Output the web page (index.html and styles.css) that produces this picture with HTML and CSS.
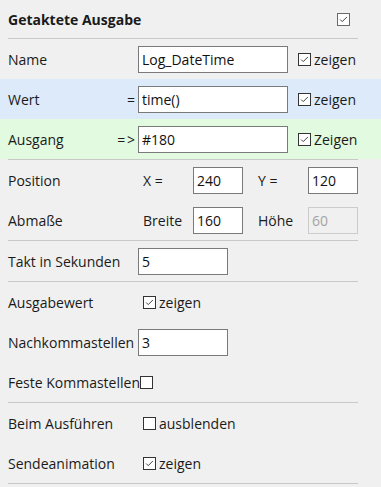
FILE: index.html
```html
<!DOCTYPE html>
<html lang="de">
<head>
  <meta charset="UTF-8">
  <title>Getaktete Ausgabe</title>
  <link rel="stylesheet" href="styles.css">
</head>
<body>

  <div class="panel">
    <!-- Kopf -->
    <div class="head">
      <span class="title">Getaktete Ausgabe</span>
      <span class="cb head-cb"><svg viewBox="0 0 13 13"><polyline points="2.5,6.5 5,9 10.5,3.5"/></svg></span>
    </div>
    <div class="sep"></div>

    <div class="row">
      <span class="lbl">Name</span>
      <input class="field wide" type="text" value="Log_DateTime">
      <span class="opt"><span class="cb"><svg viewBox="0 0 13 13"><polyline points="2.5,6.5 5,9 10.5,3.5"/></svg></span>zeigen</span>
    </div>

    <div class="row blue">
      <span class="lbl">Wert<span class="op">=</span></span>
      <input class="field wide" type="text" value="time()">
      <span class="opt"><span class="cb"><svg viewBox="0 0 13 13"><polyline points="2.5,6.5 5,9 10.5,3.5"/></svg></span>zeigen</span>
    </div>

    <div class="row green">
      <span class="lbl">Ausgang<span class="op">= &gt;</span></span>
      <input class="field wide" type="text" value="#180">
      <span class="opt"><span class="cb"><svg viewBox="0 0 13 13"><polyline points="2.5,6.5 5,9 10.5,3.5"/></svg></span>Zeigen</span>
    </div>
    <div class="sep"></div>

    <div class="row">
      <span class="lbl lbl-w">Position</span>
      <span class="sub">X =</span>
      <input class="field small" type="text" value="240">
      <span class="sub sub-2">Y =</span>
      <input class="field small" type="text" value="120">
    </div>

    <div class="row">
      <span class="lbl lbl-w">Abmaße</span>
      <span class="sub">Breite</span>
      <input class="field small" type="text" value="160">
      <span class="sub sub-2">Höhe</span>
      <input class="field small" type="text" value="60" disabled>
    </div>
    <div class="sep"></div>

    <div class="row">
      <span class="lbl">Takt in Sekunden</span>
      <input class="field mid" type="text" value="5">
    </div>
    <div class="sep"></div>

    <div class="row">
      <span class="lbl lbl-w">Ausgabewert</span>
      <span class="opt"><span class="cb"><svg viewBox="0 0 13 13"><polyline points="2.5,6.5 5,9 10.5,3.5"/></svg></span>zeigen</span>
    </div>

    <div class="row">
      <span class="lbl">Nachkommastellen</span>
      <input class="field mid" type="text" value="3">
    </div>

    <div class="row">
      <span>Feste Kommastellen</span><span class="cb"></span>
    </div>
    <div class="sep"></div>

    <div class="row">
      <span class="lbl lbl-w">Beim Ausführen</span>
      <span class="opt"><span class="cb"></span>ausblenden</span>
    </div>

    <div class="row">
      <span class="lbl lbl-w">Sendeanimation</span>
      <span class="opt"><span class="cb"><svg viewBox="0 0 13 13"><polyline points="2.5,6.5 5,9 10.5,3.5"/></svg></span>zeigen</span>
    </div>
    <div class="sep"></div>
  </div>

</body>
</html>
```

FILE: styles.css
```css
* {
  margin: 0;
  padding: 0;
  box-sizing: border-box;
}

body {
  font-family: 'Open Sans', 'Noto Sans', sans-serif;
  font-size: 14px;
  color: #1a1a1a;
  background: #f0f0f0;
}

.panel {
  width: 381px;
}

.head {
  display: flex;
  align-items: center;
  height: 38px;
  padding-left: 8px;
}

.title {
  font-weight: bold;
}

.sep {
  height: 1px;
  margin: 0 23px 0 8px;
  background: #c9c9c9;
}

.row {
  display: flex;
  align-items: center;
  height: 40px;
  padding: 0 8px;
  white-space: nowrap;
}

.blue {
  background: #dceafa;
}

.green {
  background: #e2fadf;
}

.lbl {
  display: flex;
  justify-content: space-between;
  width: 130px;
}

.lbl-w {
  width: 135px;
}

.op {
  margin-right: 4px;
  letter-spacing: -1px;
}

.sub {
  width: 50px;
}

.sub-2 {
  margin-left: 15px;
}

.field {
  height: 27px;
  padding: 0 3px;
  font: inherit;
  color: #111;
  background: #fff;
  border: 1px solid #7a7a7a;
  outline: none;
}

.field:disabled {
  color: #a3a3a3;
  background: #f0f0f0;
  border-color: #cccccc;
}

.wide {
  width: 150px;
  margin-right: 10px;
}

.mid {
  width: 90px;
}

.small {
  width: 50px;
}

.opt {
  display: flex;
  align-items: center;
}

.cb {
  display: inline-block;
  width: 13px;
  height: 13px;
  margin-right: 3px;
  background: #fff;
  border: 1px solid #333;
}

.head .head-cb {
  margin-left: auto;
  margin-right: 31px;
  border-color: #6a6a6a;
}

.cb svg {
  display: block;
  width: 11px;
  height: 11px;
  fill: none;
  stroke: #333;
  stroke-width: 1.1;
}
```
